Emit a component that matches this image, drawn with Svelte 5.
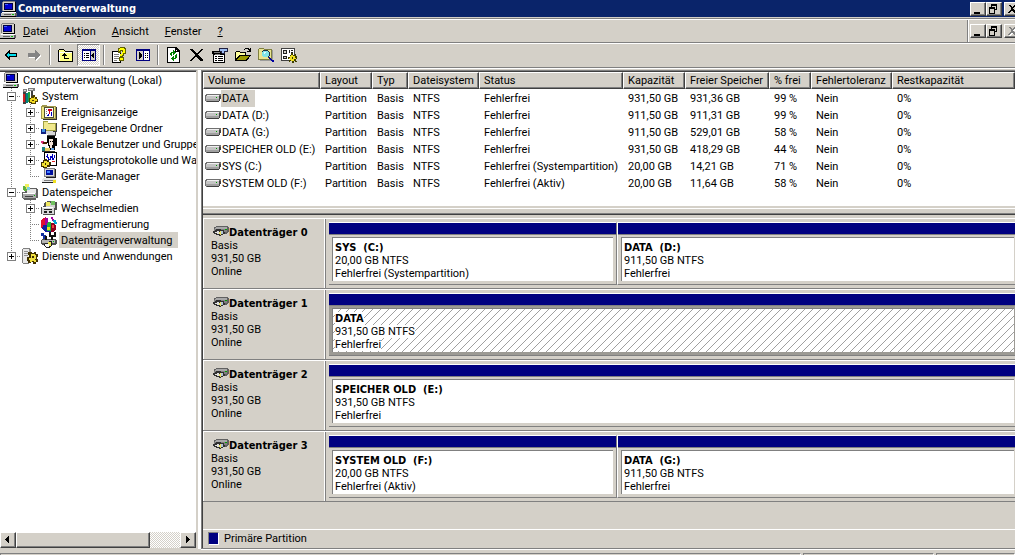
<script>
  const menus = [
    { pre: '', key: 'D', post: 'atei' },
    { pre: 'Ak', key: 't', post: 'ion' },
    { pre: '', key: 'A', post: 'nsicht' },
    { pre: '', key: 'F', post: 'enster' },
    { pre: '', key: '?', post: '' }
  ]

  const tools = [
    [{ icon: 'back', label: 'Zurück' }, { icon: 'forward', label: 'Vorwärts' }],
    [{ icon: 'up', label: 'Eine Ebene höher' }, { icon: 'treePane', label: 'Konsolenstruktur', pressed: true }],
    [{ icon: 'help', label: 'Hilfe' }, { icon: 'actionPane', label: 'Ansicht' }],
    [
      { icon: 'refresh', label: 'Aktualisieren' },
      { icon: 'remove', label: 'Löschen' },
      { icon: 'properties', label: 'Eigenschaften' },
      { icon: 'open', label: 'Öffnen' },
      { icon: 'search', label: 'Durchsuchen' },
      { icon: 'settings', label: 'Einstellungen' }
    ]
  ]

  const tree = [
    { level: 0, icon: 'computer', label: 'Computerverwaltung (Lokal)' },
    { level: 1, icon: 'tools', label: 'System', sign: '-' },
    { level: 2, icon: 'events', label: 'Ereignisanzeige', sign: '+' },
    { level: 2, icon: 'shares', label: 'Freigegebene Ordner', sign: '+' },
    { level: 2, icon: 'users', label: 'Lokale Benutzer und Gruppen', sign: '+' },
    { level: 2, icon: 'perf', label: 'Leistungsprotokolle und Warnungen', sign: '+' },
    { level: 2, icon: 'devices', label: 'Geräte-Manager', last: true },
    { level: 1, icon: 'storage', label: 'Datenspeicher', sign: '-' },
    { level: 2, icon: 'removable', label: 'Wechselmedien', sign: '+' },
    { level: 2, icon: 'defrag', label: 'Defragmentierung' },
    { level: 2, icon: 'diskmgmt', label: 'Datenträgerverwaltung', last: true },
    { level: 1, icon: 'services', label: 'Dienste und Anwendungen', sign: '+', last: true }
  ]

  let selected = $state('Datenträgerverwaltung')

  const columns = ['Volume', 'Layout', 'Typ', 'Dateisystem', 'Status', 'Kapazität', 'Freier Speicher', '% frei', 'Fehlertoleranz', 'Restkapazität']

  const volumes = [
    ['DATA', 'Partition', 'Basis', 'NTFS', 'Fehlerfrei', '931,50 GB', '931,36 GB', '99 %', 'Nein', '0%'],
    ['DATA (D:)', 'Partition', 'Basis', 'NTFS', 'Fehlerfrei', '911,50 GB', '911,31 GB', '99 %', 'Nein', '0%'],
    ['DATA (G:)', 'Partition', 'Basis', 'NTFS', 'Fehlerfrei', '911,50 GB', '529,01 GB', '58 %', 'Nein', '0%'],
    ['SPEICHER OLD (E:)', 'Partition', 'Basis', 'NTFS', 'Fehlerfrei', '931,50 GB', '418,29 GB', '44 %', 'Nein', '0%'],
    ['SYS (C:)', 'Partition', 'Basis', 'NTFS', 'Fehlerfrei (Systempartition)', '20,00 GB', '14,21 GB', '71 %', 'Nein', '0%'],
    ['SYSTEM OLD (F:)', 'Partition', 'Basis', 'NTFS', 'Fehlerfrei (Aktiv)', '20,00 GB', '11,64 GB', '58 %', 'Nein', '0%']
  ]

  const disks = [
    [
      { name: 'SYS  (C:)', size: '20,00 GB NTFS', status: 'Fehlerfrei (Systempartition)', small: true },
      { name: 'DATA  (D:)', size: '911,50 GB NTFS', status: 'Fehlerfrei' }
    ],
    [{ name: 'DATA', size: '931,50 GB NTFS', status: 'Fehlerfrei', selected: true }],
    [{ name: 'SPEICHER OLD  (E:)', size: '931,50 GB NTFS', status: 'Fehlerfrei' }],
    [
      { name: 'SYSTEM OLD  (F:)', size: '20,00 GB NTFS', status: 'Fehlerfrei (Aktiv)', small: true },
      { name: 'DATA  (G:)', size: '911,50 GB NTFS', status: 'Fehlerfrei' }
    ]
  ]

  // every icon is a stack of [fill, path] on a 16x16 grid
  const icons = {
    computer: [
      ['#808080', 'M2 0h12v1h-12zM1 1h1v9h-1z'], ['#d4d0c8', 'M2 1h12v9h-12z'], ['#000', 'M14 1h1v10h-12v-1h11z'],
      ['#000040', 'M3 2h9v7h-9z'], ['#0000d0', 'M4 3h7v5h-7z'], ['#4060ff', 'M4 3h3v1h-3z'],
      ['#fff', 'M1 11h14v1h-14z'], ['#c0c0c0', 'M0 12h14v3h-14z'], ['#606060', 'M14 12h2v3h-2zM3 13h7v1h-7z'], ['#000', 'M0 15h15v1h-15z'], ['#00c000', 'M11 13h2v1h-2z']
    ],
    back: [['#000', 'M0 8l6-5v3h7v4h-7v3z'], ['#00e0f0', 'M2 8l3-3v2h7v2h-7v2z']],
    forward: [['#fff', 'M15 9l-6-5v3h-7v4h7v3z'], ['#848484', 'M14 8l-6-5v3h-7v4h7v3z']],
    up: [
      ['#000', 'M0 3h1v-1h5v1h1v1h8v11h-15z'], ['#ffff84', 'M1 3h5v1h1v1h7v9h-13z'], ['#fff', 'M1 5h13v1h-13zM1 6h1v8h-1z'],
      ['#000', 'M6 6h1v1h1v1h1v1h-2v2h4v1h-5v-3h-2v-1h1v-1h1z']
    ],
    treePane: [
      ['#000080', 'M1 2h14v12h-14z'], ['#fff', 'M2 4h7v9h-7z'], ['#d4d0c8', 'M10 4h4v9h-4z'], ['#000', 'M3 6h1v1h-1zM5 6h3v1h-3zM3 8h1v1h-1zM5 8h3v1h-3zM3 10h1v1h-1zM5 10h3v1h-3zM13 5v7l-3-3v-1z']
    ],
    actionPane: [
      ['#000080', 'M1 2h14v12h-14z'], ['#d4d0c8', 'M2 4h6v9h-6z'], ['#fff', 'M9 4h5v9h-5z'], ['#000', 'M4 5v7l3-3v-1zM10 6h1v1h-1zM12 6h1v1h-1zM10 8h1v1h-1zM12 8h1v1h-1zM10 10h1v1h-1zM12 10h1v1h-1z']
    ],
    help: [
      ['#000', 'M0 4h9v12h-9z'], ['#fff', 'M1 5h7v10h-7z'], ['#808080', 'M2 7h5v1h-5zM2 9h5v1h-5zM2 11h5v1h-5zM2 13h3v1h-3z'],
      ['#606000', 'M6 1h2v-1h5v1h1v6h-2v2h-1v1h1v4h-5v-4h1v-3h2v-3h-1v2h-3z'], ['#ffff00', 'M7 2h1v-1h4v1h1v4h-2v2h-1v1h-2v-2h2v-2h1v-2h-3v1h-1zM8 11h3v2h-3z']
    ],
    refresh: [
      ['#000', 'M1 0h9l4 4v12h-13z'], ['#fff', 'M2 1h7v4h4v10h-11z'], ['#000', 'M9 1l4 4h-4z'], ['#fff', 'M10 3l1 1h-1z'],
      ['#008000', 'M5 5h2v-2h1v1h1v1h1v1h-1v1h-1v1h-1v-2h-1v3h-1v-1h-1v-2h1zM10 7h1v4h-1v1h-2v2h-1v-1h-1v-1h-1v-1h1v-1h1v-1h1v2h1v-3h1z']
    ],
    remove: [['#000', 'M1 2h2l5 4 4-4h2l-5 6 5 5v1h-2l-5-4-5 4h-1v-1l5-5-5-5z']],
    properties: [
      ['#000', 'M0 4h9v1h4v11h-12v-9h-1z'], ['#fff', 'M2 8h10v7h-10z'], ['#000', 'M3 9h2v1h-2zM6 9h5v1h-5zM3 11h2v1h-2zM6 11h5v1h-5zM3 13h2v1h-2zM6 13h5v1h-5z'],
      ['#808080', 'M2 5h6v1h-6zM3 7h5v1h-5z'], ['#202040', 'M7 1h9v4h-3v2h-3v-1h-1v-1h-1v-1h-1z'], ['#9cbcf0', 'M8 2h7v2h-3v2h-2v-2h-2z']
    ],
    open: [
      ['#000', 'M0 5h1v-1h4v1h6v3h5l-4 6h-12zM9 2h1v-1h4v1h1v-1h1v4h-4v-1h2v-1h-1v-1h-3v1h-1z'], ['#ffff9c', 'M1 5h4v1h5v2h-6l-3 4z'], ['#9c9c00', 'M5 9h9l-3 4h-9z']
    ],
    search: [
      ['#808040', 'M0 2h1v-1h5v1h8v11h-14z'], ['#e8e490', 'M1 2h5v1h7v9h-12z'], ['#9c9c9c', 'M14 3h1v11h-13v-1h12z'],
      ['#203040', 'M5 3h5v1h1v1h1v4h-1v1h1v1h1v1h1v1h2v2h-2v-1h-1v-1h-1v-1h-1v-1h-1v-1h-5v-1h-1v-5h1z'], ['#80e4e8', 'M5 4h5v1h1v4h-1v1h-5v-1h-1v-4h1z'], ['#e0ffff', 'M6 5h2v1h-1v1h-1z'], ['#0000a0', 'M11 10h1v1h1v1h1v1h2v2h-2v-1h-1v-1h-1v-1h-1z']
    ],
    settings: [
      ['#404040', 'M0 1h14v13h-14z'], ['#fff', 'M1 2h12v11h-12z'], ['#202020', 'M2 3h4v4h-4zM2 9h4v3h-4zM8 3h1v3h-1zM10 3h2v1h-2zM10 5h2v1h-2z'], ['#d4d0c8', 'M3 4h2v2h-2zM3 10h2v1h-2z'],
      ['#404000', 'M10 6h2v2h2v-1h1v2h1v3h-1v2h1v1h-2v-1h-1v2h-2v-2h-2v1h-1v-2h1v-1h-2v-2h2v-2h1z'], ['#f0e020', 'M10 8h2v1h2v2h1v1h-2v2h-3v-1h-1v-1h-1v-1h1v-2h1z'], ['#404000', 'M11 10h1v2h-1z']
    ],
    tools: [
      ['#808080', 'M1 1h4v3h-4zM6 0h7v3h-7z'], ['#e0e0e0', 'M2 2h2v1h-2zM7 1h4v1h-4z'], ['#404040', 'M1 4h3v12h-3zM9 3h2v7h-2z'],
      ['#d02020', 'M1 6h2v8h-2z'], ['#008080', 'M4 5h2v10h-2z'], ['#20a040', 'M6 4h2v10h-2z'],
      ['#504000', 'M9 8h2v-1h2v2h2v2h1v3h-2v2h-5v-1h-2v-5h2z'], ['#f0d820', 'M9 10h3v-1h1v2h2v2h-2v2h-3v-1h-2v-3h1z'], ['#504000', 'M10 12h2v1h-2z']
    ],
    events: [
      ['#a0984c', 'M0 2h1v-1h5v1h9v13h-15z'], ['#f0e880', 'M1 3h13v11h-13z'], ['#505030', 'M3 3h10v11h-10z'], ['#fff', 'M4 4h8v9h-8z'],
      ['#d00020', 'M7 5h4v2h-2v3h-1v-3h-1z'], ['#0000c0', 'M7 10h1v2h-2v-1h1zM10 8h1v4h-1z'], ['#808080', 'M5 5h1v1h-1zM5 7h1v1h-1zM5 9h1v1h-1z'], ['#303030', 'M15 3h1v13h-14v-1h13z']
    ],
    shares: [
      ['#a0a040', 'M2 1h5v2h8v8h-13z'], ['#f0e88c', 'M3 2h4v2h7v6h-11z'], ['#404040', 'M15 3h1v9h-9v-1h8z'],
      ['#102080', 'M0 9h5v5h-5z'], ['#4090e0', 'M1 9h3v3h-3z'], ['#d8d8d8', 'M5 11h7v1h2v3h-7v-1h-2z'], ['#404040', 'M6 15h9v1h-9zM14 11h1v4h-1z']
    ],
    users: [
      ['#000', 'M6 0h8v2h2v8h-2v4h-6v-4h-1v-3h-1z'], ['#f4e4d8', 'M8 3h4v6h-1v3h-2v-3h-1z'], ['#000', 'M9 5h1v1h-1zM11 5h3v4h-2v-3h-1z'],
      ['#e03080', 'M0 5h3v3h-2v-1h-1z'], ['#502000', 'M2 6h4v2h-4z'], ['#f8f8f8', 'M2 8h4v4h-4z'], ['#208080', 'M1 11h3v4h-3z'], ['#e8d060', 'M4 12h5v3h-5z'], ['#303030', 'M1 15h13v1h-13z'], ['#60a0e0', 'M10 12h3v2h-3z']
    ],
    perf: [
      ['#000', 'M3 0h13v14h-13z'], ['#fff', 'M4 1h11v12h-11z'], ['#0000c0', 'M5 4h1v-2h1v3h1v2h1v-3h2v-2h1v4h1v-3h1v3h-1v2h-2v-2h-1v2h-2v1h-1v-3h-1z'], ['#e02020', 'M11 9h3v1h-3z'],
      ['#403000', 'M3 7h3v1h2v2h2v3h-1v2h-3v1h-4v-1h-2v-5h2v-2h1z'], ['#f0e030', 'M3 9h3v1h2v3h-2v2h-3v-1h-2v-3h2z'], ['#403000', 'M4 11h1v2h-1z']
    ],
    devices: [
      ['#808080', 'M3 0h11v9h-11z'], ['#d8d8d8', 'M4 1h9v7h-9z'], ['#0010a0', 'M5 2h7v5h-7z'], ['#4080ff', 'M6 3h3v2h-3z'], ['#202020', 'M14 1h1v9h-10v-1h9z'],
      ['#e8e8e8', 'M2 10h11l2 2v2h-14v-2z'], ['#808080', 'M3 12h9v1h-9z'], ['#202020', 'M1 14h14v1h-14z'], ['#f0e020', 'M12 12h3v3h-3z']
    ],
    storage: [
      ['#606060', 'M4 4h11l1 2v8h-2v2h-12l-2-2v-6h3z'],
      ['#e8e8e8', 'M5 5h9v4h-9z'], ['#a8a8a8', 'M1 9h13v5h-13z'], ['#fff', 'M1 9h12v1h-12z'], ['#404040', 'M3 12h8v1h-8z'], ['#00c000', 'M12 11h1v1h-1z'],
      ['#60b040', 'M1 2h4v5h-3l-1-1z'], ['#f0f060', 'M3 0h4v3l-3 2z'], ['#80d0e0', 'M5 3h3v3h-3z']
    ],
    removable: [
      ['#505050', 'M4 2h2v-1h8v1h2v8h-2v5h-12v-1h-2v-7h2z'], ['#d0d0d0', 'M5 3h9v5h-9z'], ['#f0e860', 'M5 2h4v4h-4z'], ['#70c060', 'M10 1h4v4h-4z'], ['#d8d8d8', 'M1 7h12v7h-12z'],
      ['#202020', 'M3 9h8v1h-8zM3 11h3v2h-3zM8 11h3v2h-3z'], ['#fff', 'M1 7h11v1h-11z']
    ],
    defrag: [
      ['#e01030', 'M0 4l5-3v10l-3 3-2-2z'], ['#a000a0', 'M4 2h3v8h-3zM10 1h2v2h1v2h-2v-2h-1z'], ['#00a0d0', 'M12 4h3v2h1v2h-3v-2h-1z'], ['#1020a0', 'M2 9h4v5h4v2h-6l-3-3z'],
      ['#20b040', 'M7 6h3v9h-4v-6z'], ['#e0e020', 'M6 11h3v3h-3z'], ['#900020', 'M10 7h3l2 3v3l-3 3h-2z'], ['#f04040', 'M11 9h2v3h-2z']
    ],
    diskmgmt: [
      ['#1030a0', 'M0 1h3v2h2v4h-3v-3h-2z'], ['#505050', 'M1 7h13l2 1v4l-2 1h-13l-1-1v-4z'], ['#b4b4b4', 'M1 8h13v3h-13z'],
      ['#101010', 'M8 0h2v3h3v-3h2v5h-3v3h-2v-3h-2zM4 4h2v4h-2z'],
      ['#202020', 'M4 11h4v-2h3v5l-3 2h-3l-3-3z'], ['#f4f4f4', 'M4 12h4v3h-3z'], ['#f0e850', 'M7 10h3v4h-2z'], ['#00c000', 'M12 9h1v1h-1z']
    ],
    services: [
      ['#808080', 'M1 0h6l2 2v12h-2v2h-6l-1-2v-13z'], ['#e8e8e8', 'M1 1h6v14h-6z'], ['#909090', 'M2 3h4v1h-4zM2 5h4v1h-4zM2 7h4v1h-4zM7 2h2v12h-2z'],
      ['#403000', 'M8 4h2v1h2v-1h2v2h2v3h-1v2h1v3h-2v2h-3v-2h-2v1h-3v-2h-1v-4h2v-2h-1v-3h2z'], ['#f0e040', 'M9 6h4v1h1v4h-1v1h1v2h-2v-1h-2v1h-2v-2h-1v-2h2z'], ['#403000', 'M10 8h2v2h-2z']
    ],
    volume: [
      ['#707070', 'M2 3h14v5h-1v2h-1v1h-13l-1-1v-6z'], ['#f0f0f0', 'M2 4h12v1h-12z'], ['#c4c4c4', 'M1 5h13v4h-13z'], ['#a0a0a0', 'M1 8h13v2h-13z'],
      ['#404040', 'M14 5h2v3h-1v2h-1v1h-12v-1h12z'], ['#00a000', 'M11 6h1v1h-1z']
    ],
    // drive lying flat, with the hand in front of it
    disk: [
      ['#606060', 'M3 1h12v1h1v5h-1v1h-1v1h-11l-2-2v-5h2z'], ['#a8a8a8', 'M3 2h11v2h-12v-1h1z'], ['#808080', 'M1 4h13v3h-12z'], ['#00a000', 'M12 4h2v1h-2z'],
      ['#303030', 'M3 4h5v1h3v2h1v2h-2v1h-2v1h-2v-1h-3v-1h-2v-1h-1v-2h2v-1h1z'], ['#e0e0e0', 'M2 7h2v-1h2v3h-2v-1h-2z'], ['#e8e060', 'M6 7h1v-1h1v4h-1v-1h-1z'], ['#b0c4d8', 'M8 6h2v3h-2z']
    ],
    min: [['#000', 'M4 11h6v2h-6z']],
    restore: [['#000', 'M5 3h6v2h-5v2h-1zM10 5h1v4h-2v-1h1zM3 6h6v2h-6zM3 8h1v4h4v-4h1v5h-6z']],
    close: [['#000', 'M4 4h2l2 2 2-2h2l-3 3v1l3 3v1h-2l-2-3-2 3h-2v-1l3-3v-1z']],
    closeOff: [['#fff', 'M5 5h2l2 2 2-2h2l-3 3v1l3 3v1h-2l-2-3-2 3h-2v-1l3-3v-1z'], ['#808080', 'M4 4h2l2 2 2-2h2l-3 3v1l3 3v1h-2l-2-3-2 3h-2v-1l3-3v-1z']],
    left: [['#000', 'M9 4v7h-1v-1h-1v-1h-1v-1h-1v-1h1v-1h1v-1h1v-1z']],
    right: [['#000', 'M6 4h1v1h1v1h1v1h1v1h-1v1h-1v1h-1v1h-1z']]
  }
</script>

{#snippet icon(name)}
  <svg class="icon" width="16" height="16" viewBox="0 0 16 16" shape-rendering="crispEdges" aria-hidden="true">
    {#each icons[name] as [fill, d]}<path {fill} {d} />{/each}
  </svg>
{/snippet}

<div class="window">
  <header class="titlebar">
    {@render icon('computer')}
    <h1>Computerverwaltung</h1>
    <div class="caption">
      <button aria-label="Minimieren">{@render icon('min')}</button>
      <button aria-label="Wiederherstellen">{@render icon('restore')}</button>
      <button class="close" aria-label="Schließen">{@render icon('close')}</button>
    </div>
  </header>

  <nav class="menubar">
    {@render icon('computer')}
    <div class="menus">
      {#each menus as m}
        <button>{m.pre}<u>{m.key}</u>{m.post}</button>
      {/each}
    </div>
    <div class="caption child">
      <button aria-label="Fenster minimieren">{@render icon('min')}</button>
      <button aria-label="Fenster wiederherstellen">{@render icon('restore')}</button>
      <button class="close" aria-label="Fenster schließen" disabled>{@render icon('closeOff')}</button>
    </div>
  </nav>

  <div class="toolbar">
    {#each tools as group}
      <div class="group">
        {#each group as tool}
          <button class:pressed={tool.pressed} aria-label={tool.label}>{@render icon(tool.icon)}</button>
        {/each}
      </div>
    {/each}
  </div>

  <main>
    <aside>
      <ul class="tree">
        {#each tree as node}
          <li>
            {#if node.level === 2}<span class="cell line"></span>{/if}
            {#if node.level > 0}
              <span class="cell line branch" class:last={node.last}>
                {#if node.sign}<button class="sign" class:plus={node.sign === '+'} aria-label="{node.label} umschalten"></button>{/if}
              </span>
            {/if}
            {@render icon(node.icon)}
            <button class="label" class:selected={node.label === selected} onclick={() => (selected = node.label)}>{node.label}</button>
          </li>
        {/each}
      </ul>
      <div class="scrollbar">
        <button aria-label="Nach links">{@render icon('left')}</button>
        <div class="thumb"></div>
        <div class="track"></div>
        <button aria-label="Nach rechts">{@render icon('right')}</button>
      </div>
    </aside>

    <section class="content">
      <div class="volumes">
        <table>
          <colgroup>
            {#each columns as _, i}<col class="c{i}" />{/each}
          </colgroup>
          <thead>
            <tr>{#each columns as column}<th>{column}</th>{/each}</tr>
          </thead>
          <tbody>
            {#each volumes as row, r}
              <tr>
                {#each row as value, i}
                  {#if i === 0}
                    <td class="name"><div>{@render icon('volume')}<span class:selected={r === 0}>{value}</span></div></td>
                  {:else}
                    <td>{value}</td>
                  {/if}
                {/each}
              </tr>
            {/each}
          </tbody>
        </table>
      </div>
      <div class="splitter"></div>

      <div class="disks">
        {#each disks as partitions, n}
          <div class="disk">
            <div class="info">
              <h2>{@render icon('disk')}Datenträger {n}</h2>
              <p>Basis</p>
              <p>931,50 GB</p>
              <p>Online</p>
            </div>
            <div class="partitions">
              {#each partitions as p}
                <div class="partition" class:small={p.small} class:active={p.selected}>
                  <div class="stripe"></div>
                  <div class="frame">
                    <div class="box">
                      <h3><span>{p.name}</span></h3>
                      <p><span>{p.size}</span></p>
                      <p><span>{p.status}</span></p>
                    </div>
                  </div>
                </div>
              {/each}
            </div>
          </div>
        {/each}
      </div>

      <div class="legend"><span class="swatch"></span>Primäre Partition</div>
    </section>
  </main>

  <footer>
    <div></div>
    <div></div>
    <div></div>
  </footer>
</div>

<style>
  :global(body) {
    margin: 0;
    overflow: hidden;
  }

  .window {
    display: flex;
    flex-direction: column;
    height: 100vh;
    overflow: hidden;
    color: #000;
    background: #d4d0c8;
    font: 11px/13px Roboto, Tahoma, sans-serif;
    white-space: nowrap;
  }

  h1, h2, h3, p, ul {
    margin: 0;
    padding: 0;
    font-size: 11px;
    list-style: none;
  }

  h1, h2, h3 {
    font-family: "DejaVu Sans Condensed", Tahoma, sans-serif;
  }

  button {
    padding: 0;
    border: none;
    color: inherit;
    background: none;
    font: inherit;
  }

  .icon {
    display: block;
    flex: none;
  }

  .titlebar {
    display: flex;
    align-items: center;
    height: 17px;
    padding-left: 1px;
    color: #fff;
    background: #0a246a;
    border-bottom: 1px solid #d4d0c8;
  }

    h1 {
      flex: 1;
      padding-left: 1px;
    }

  .caption {
    display: flex;
    margin-right: -5px;
  }

    .caption button {
      width: 16px;
      height: 14px;
      overflow: hidden;
      background: #d4d0c8;
      box-sizing: border-box;
      border: 1px solid;
      border-color: #fff #404040 #404040 #fff;
      box-shadow: inset -1px -1px #808080;
    }

    .caption .icon { margin: -2px -1px; }

    .caption .close { margin-left: 2px; }

  .menubar {
    display: flex;
    align-items: center;
    height: 23px;
    border-top: 1px solid #808080;
    border-bottom: 1px solid #808080;
    box-shadow: inset 0 1px #fff, 0 1px #fff;
  }

  .menus {
    display: flex;
    flex: 1;
    gap: 16px;
    padding: 1px 0 0 7px;
  }

  .child {
    align-items: center;
    height: 22px;
    padding-left: 2px;
    border-left: 1px solid #808080;
    box-shadow: inset 1px 0 #fff;
  }

  .toolbar {
    display: flex;
    height: 22px;
    padding: 1px 0;
    border-bottom: 1px solid #808080;
    box-shadow: 0 1px #fff;
  }

  .group { display: flex; }

    .group + .group::before {
      content: '';
      width: 1px;
      margin: 1px 3px;
      background: #808080;
      border-right: 1px solid #fff;
    }

    .toolbar button {
      display: grid;
      place-items: center;
      box-sizing: border-box;
      width: 23px;
      height: 22px;
    }

    .toolbar .pressed {
      border: 1px solid;
      border-color: #808080 #fff #fff #808080;
      background: repeating-conic-gradient(#fff 0 25%, #d4d0c8 0 50%) 0 0 / 2px 2px;
    }

  main {
    display: flex;
    flex: 1;
    min-height: 0;
    margin-top: 2px;
  }

  aside {
    display: flex;
    flex-direction: column;
    flex: 0 0 196px;
    overflow: hidden;
    background: #fff;
    border-top: 1px solid #808080;
    box-shadow: inset 0 1px #404040;
    border-right: 1px solid #d4d0c8;
    border-bottom: 1px solid #d4d0c8;
  }

  .tree {
    flex: 1;
    padding: 1px 0 0 2px;
    overflow: hidden;
  }

    .tree li {
      display: flex;
      align-items: center;
      gap: 2px;
      height: 16px;
      padding-left: 1px;
    }

    .cell {
      display: grid;
      place-items: center;
      flex: none;
      width: 19px;
      height: 16px;
      margin-left: -1px;
      margin-right: -1px;
    }

    .line { background: repeating-linear-gradient(#808080 0 1px, transparent 1px 2px) 9px 0 / 1px 100% no-repeat; }

    .branch {
      background:
        repeating-linear-gradient(#808080 0 1px, transparent 1px 2px) 9px 0 / 1px 100% no-repeat,
        repeating-linear-gradient(90deg, #808080 0 1px, transparent 1px 2px) 9px 8px / 10px 1px no-repeat;
    }

    .branch.last { background-size: 1px 8px, 10px 1px; }

    .sign {
      width: 9px;
      height: 9px;
      border: 1px solid #808080;
      box-sizing: border-box;
      background: linear-gradient(#000, #000) 1px 3px / 5px 1px no-repeat #fff;
    }

    .sign.plus {
      background:
        linear-gradient(#000, #000) 1px 3px / 5px 1px no-repeat,
        linear-gradient(#000, #000) 3px 1px / 1px 5px no-repeat #fff;
    }

    .label {
      min-width: 0;
      height: 16px;
      padding: 0 6px 0 2px;
      overflow: hidden;
      text-align: left;
    }

    .selected { background: #d4d0c8; }

  .scrollbar {
    display: flex;
    height: 16px;
    background: repeating-conic-gradient(#fff 0 25%, #d4d0c8 0 50%) 0 0 / 2px 2px;
  }

    .scrollbar button, .thumb {
      box-sizing: border-box;
      width: 16px;
      overflow: hidden;
      background: #d4d0c8;
      border: 1px solid;
      border-color: #fff #404040 #404040 #fff;
      box-shadow: inset -1px -1px #808080;
    }

    .scrollbar .icon { margin: -1px; }

    .scrollbar .thumb { flex: 134; }

    .track { flex: 30; }

  .content {
    display: flex;
    flex-direction: column;
    flex: 1;
    min-width: 0;
    margin-left: 4px;
    border-left: 1px solid #808080;
    border-top: 1px solid #808080;
    border-bottom: 1px solid #808080;
    box-shadow: -3px 0 #fff, 0 1px #fff, inset 1px 1px #404040;
  }

  .volumes {
    height: 134px;
    margin: 1px 0 0 1px;
    overflow: hidden;
    background: #fff;
  }

  table {
    width: 100%;
    table-layout: fixed;
    border-collapse: separate;
    border-spacing: 0;
  }

  .c0 { width: 117px; }
  .c1 { width: 52px; }
  .c2 { width: 36px; }
  .c3 { width: 71px; }
  .c4 { width: 144px; }
  .c5 { width: 62px; }
  .c6 { width: 84px; }
  .c7 { width: 42px; }
  .c8 { width: 81px; }

  th {
    height: 15px;
    padding: 0 0 0 4px;
    background: #d4d0c8;
    border: 1px solid;
    border-color: #fff #404040 #404040 #fff;
    box-shadow: inset -1px -1px #808080;
    font-weight: normal;
    text-align: left;
  }

  td {
    height: 17px;
    padding: 0 0 0 5px;
  }

  tbody tr:first-child td { border-top: 1px solid #fff; }

  .name div {
    display: flex;
    align-items: center;
  }

    td.name { padding-left: 2px; }

    .name span {
      padding: 2px 6px 2px 1px;
    }

  .splitter {
    height: 5px;
    margin: 2px 0 0 1px;
    border-top: 1px solid #fff;
    border-bottom: 1px solid #404040;
    box-shadow: inset 0 -1px #808080;
  }

  .disks {
    flex: 1;
    min-height: 0;
    margin-left: 1px;
    padding-top: 3px;
    overflow: hidden;
  }

  .disk {
    display: flex;
    height: 69px;
    border-top: 1px solid #fff;
    border-bottom: 1px solid #808080;
  }

  .info {
    flex: 0 0 113px;
    padding: 7px 0 0 7px;
    border-left: 1px solid #fff;
    border-right: 1px solid #fff;
    box-shadow: 1px 0 #808080;
    margin-right: 1px;
  }

    .info h2 {
      display: flex;
      align-items: center;
      height: 13px;
      padding-left: 2px;
    }

  .partitions {
    display: flex;
    flex: 1;
    min-width: 0;
    padding: 3px 0 3px 3px;
  }

  .partition {
    display: flex;
    flex-direction: column;
    flex: 1;
    border-top: 1px solid #fff;
    border-bottom: 1px solid #808080;
  }

    .partition.small {
      flex: 0 0 287px;
      border-right: 1px solid #808080;
    }

    .small + .partition { border-left: 1px solid #fff; }

  .stripe {
    height: 11px;
    background: #000080;
    border-bottom: 1px solid #808080;
  }

  .frame {
    flex: 1;
    padding: 2px 1px 2px 3px;
  }

    .small .frame { padding-right: 3px; }

    .active .frame { background: #9c9a94; }

  .box {
    height: 40px;
    padding: 3px 0 0 2px;
    background: #fff;
    border-top: 1px solid #808080;
    border-left: 1px solid #808080;
  }

    .box h3 { white-space: pre; }

    .active .box { background: linear-gradient(135deg, transparent 47%, #a0a0a0 47% 53%, transparent 53%) 0 0 / 8px 8px #fff; }

    .active span { background: #fff; }

  .legend {
    display: flex;
    align-items: center;
    height: 17px;
    margin-left: 1px;
    padding-bottom: 1px;
    border-top: 1px solid #fff;
  }

    .swatch {
      width: 9px;
      height: 11px;
      margin: 0 5px;
      background: #000080;
      border: 1px solid;
      border-color: #808080 #fff #fff #808080;
    }

  footer {
    display: flex;
    gap: 2px;
    height: 2px;
    margin-top: 4px;
  }

    footer div {
      flex: 0 0 129px;
      border-top: 1px solid #808080;
      border-left: 1px solid #808080;
      border-right: 1px solid #fff;
    }

    footer div:first-child { flex: 1; }

    footer div:last-child { flex: 0 0 77px; }
</style>
